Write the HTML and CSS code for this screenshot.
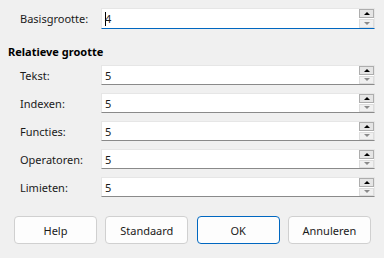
FILE: index.html
```html
<!DOCTYPE html>
<html>
<head>
<meta charset="utf-8">
<link rel="stylesheet" href="styles.css">
</head>
<body>
<div class="dialog">
  <div class="row basis">
    <span class="label">Basisgrootte:</span>
    <div class="spin focused">
      <span class="value"><span class="caret"></span>4</span>
      <div class="arrows">
        <span class="arrow up"><i></i></span>
        <span class="arrow down"><i></i></span>
      </div>
    </div>
  </div>
  <div class="title">Relatieve grootte</div>
  <div class="rows">
    <div class="row">
      <span class="label">Tekst:</span>
      <div class="spin"><span class="value">5</span><div class="arrows"><span class="arrow up"><i></i></span><span class="arrow down"><i></i></span></div></div>
    </div>
    <div class="row">
      <span class="label">Indexen:</span>
      <div class="spin"><span class="value">5</span><div class="arrows"><span class="arrow up"><i></i></span><span class="arrow down"><i></i></span></div></div>
    </div>
    <div class="row">
      <span class="label">Functies:</span>
      <div class="spin"><span class="value">5</span><div class="arrows"><span class="arrow up"><i></i></span><span class="arrow down"><i></i></span></div></div>
    </div>
    <div class="row">
      <span class="label">Operatoren:</span>
      <div class="spin"><span class="value">5</span><div class="arrows"><span class="arrow up"><i></i></span><span class="arrow down"><i></i></span></div></div>
    </div>
    <div class="row">
      <span class="label">Limieten:</span>
      <div class="spin"><span class="value">5</span><div class="arrows"><span class="arrow up"><i></i></span><span class="arrow down"><i></i></span></div></div>
    </div>
  </div>
  <div class="buttons">
    <button class="btn">Help</button>
    <button class="btn">Standaard</button>
    <button class="btn default">OK</button>
    <button class="btn">Annuleren</button>
  </div>
</div>
</body>
</html>
```
FILE: styles.css
```css
html, body {
  margin: 0;
  padding: 0;
  background: #f0f0f0;
}
body {
  width: 384px;
  height: 258px;
  overflow: hidden;
  font-family: "Segoe UI", "Noto Sans", "Liberation Sans", sans-serif;
  font-size: 11px;
  color: #1a1a1a;
}
.dialog {
  padding: 8px 9px 0 8px;
}
.row {
  display: flex;
  align-items: center;
  height: 20px;
}
.row.basis {
  height: 21px;
}
.label {
  width: 93px;
  padding-left: 12px;
  box-sizing: border-box;
  flex: none;
  white-space: nowrap;
}
.spin {
  position: relative;
  flex: none;
  width: 274px;
  height: 100%;
  box-sizing: border-box;
  background: #ffffff;
  border: 1px solid #e6e6e6;
  border-bottom: 1px solid #8a8a8a;
  display: flex;
  align-items: center;
}
.spin.focused {
  border-bottom-color: #0067c0;
}
.value {
  padding-left: 3px;
  display: flex;
  align-items: center;
}
.caret {
  display: inline-block;
  width: 1px;
  height: 14px;
  background: #000;
  margin-right: -1px;
}
.arrows {
  margin-left: auto;
  width: 15px;
  display: flex;
  flex-direction: column;
  gap: 1px;
  align-self: stretch;
}
.arrow {
  flex: 1;
  box-sizing: border-box;
  display: flex;
  align-items: center;
  justify-content: center;
}
.arrow.up {
  background: #e5e5e5;
  border: 1px solid #adadad;
}
.arrow.down {
  background: #f0f0f0;
  border: 1px solid #dcdcdc;
}
.arrow i {
  width: 0;
  height: 0;
  border-left: 3px solid transparent;
  border-right: 3px solid transparent;
}
.arrow.up i {
  border-bottom: 3px solid #000;
}
.arrow.down i {
  border-top: 3px solid #8a8a8a;
}
.title {
  margin-top: 15px;
  height: 16px;
  line-height: 16px;
  font-weight: bold;
  color: #000;
}
.rows {
  margin-top: 5px;
  display: flex;
  flex-direction: column;
  gap: 8px;
}
.buttons {
  margin-top: 19px;
  padding-left: 6px;
  display: flex;
  gap: 8.3px;
}
.btn {
  width: 83px;
  height: 28px;
  box-sizing: border-box;
  border: 1px solid #d0d0d0;
  border-radius: 4px;
  background: #fdfdfd;
  font-family: inherit;
  font-size: 11px;
  color: #1a1a1a;
  padding: 0;
}
.btn.default {
  border: 1px solid #0067c0;
}
```
